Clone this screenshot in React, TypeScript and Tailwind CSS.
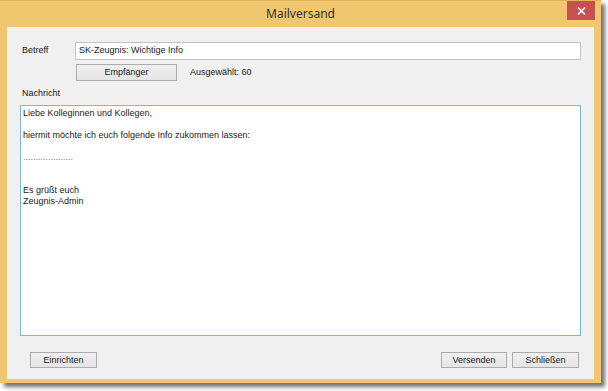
import React from 'react';

// --- WinButton ---
interface WinButtonProps {
    label: string;
    className?: string;
}
const WinButton: React.FC<WinButtonProps> = ({ label, className = '' }) => (
    <button
        type="button"
        className={`flex items-center justify-center border border-[#acacac] bg-gradient-to-b from-[#f0f0f0] to-[#e5e5e5] text-[9px] text-[#1a1a1a] leading-none ${className}`}
    >
        {label}
    </button>
);

const messageLines = [
    'Liebe Kolleginnen und Kollegen,',
    '',
    'hiermit möchte ich euch folgende Info zukommen lassen:',
    '',
    '....................',
    '',
    '',
    'Es grüßt euch',
    'Zeugnis-Admin',
];

// --- Main Component ---
const App: React.FC = () => {
    return (
        <div className="w-[608px] h-[391px] bg-white" style={{ fontFamily: '"Liberation Sans", Arial, sans-serif' }}>
            <div className="w-[601px] h-[383px] flex flex-col bg-[#f0c66e] border-t border-[#e2b45c] shadow-[4px_4px_4px_rgba(0,0,0,0.55)]">
                {/* title bar */}
                <div className="relative h-[26px] flex items-center justify-center">
                    <span className="text-[12px] text-[#333] pb-[1px]" style={{ fontFamily: '"Noto Sans", "Open Sans", sans-serif' }}>
                        Mailversand
                    </span>
                    <div className="absolute right-[6px] top-0 w-[28px] h-[19px] bg-[#c75050] flex items-center justify-center">
                        <svg width="9" height="8" viewBox="0 0 9 8">
                            <path d="M1 0.5 L8 7.5 M8 0.5 L1 7.5" stroke="white" strokeWidth="1.6" />
                        </svg>
                    </div>
                </div>

                {/* client area */}
                <div className="mx-[7px] mb-[4px] flex-1 bg-[#f0f0f0] flex flex-col text-[9px] text-[#1a1a1a] px-[13px] pt-[15px]">
                    <div className="flex items-center h-[18px]">
                        <span className="w-[55px] pl-[2px]">Betreff</span>
                        <div className="flex-1 h-[18px] bg-white border border-[#c3c3c3] flex items-center px-[3px]">
                            SK-Zeugnis: Wichtige Info
                        </div>
                    </div>
                    <div className="flex items-center mt-[4px] h-[17px] pl-[56px]">
                        <WinButton label="Empfänger" className="w-[101px] h-[17px]" />
                        <span className="ml-[13px]">Ausgewählt: 60</span>
                    </div>
                    <div className="mt-[6px] pl-[2px] h-[12px] leading-[12px]">Nachricht</div>
                    <div className="mt-[6px] h-[231px] bg-white border border-[#7eb4ea] px-[2px] pt-[2px] leading-[11px]">
                        {messageLines.map((line, i) => (
                            <div key={i} className={`h-[11px] whitespace-pre ${line.startsWith('.') ? 'text-[#777]' : ''}`}>
                                {line}
                            </div>
                        ))}
                    </div>
                    <div className="flex items-center justify-between mt-[16px] pl-[10px] pr-[2px]">
                        <WinButton label="Einrichten" className="w-[67px] h-[16px]" />
                        <div className="flex gap-[5px]">
                            <WinButton label="Versenden" className="w-[66px] h-[16px]" />
                            <WinButton label="Schließen" className="w-[67px] h-[16px]" />
                        </div>
                    </div>
                </div>
            </div>
        </div>
    );
};

export default App;
